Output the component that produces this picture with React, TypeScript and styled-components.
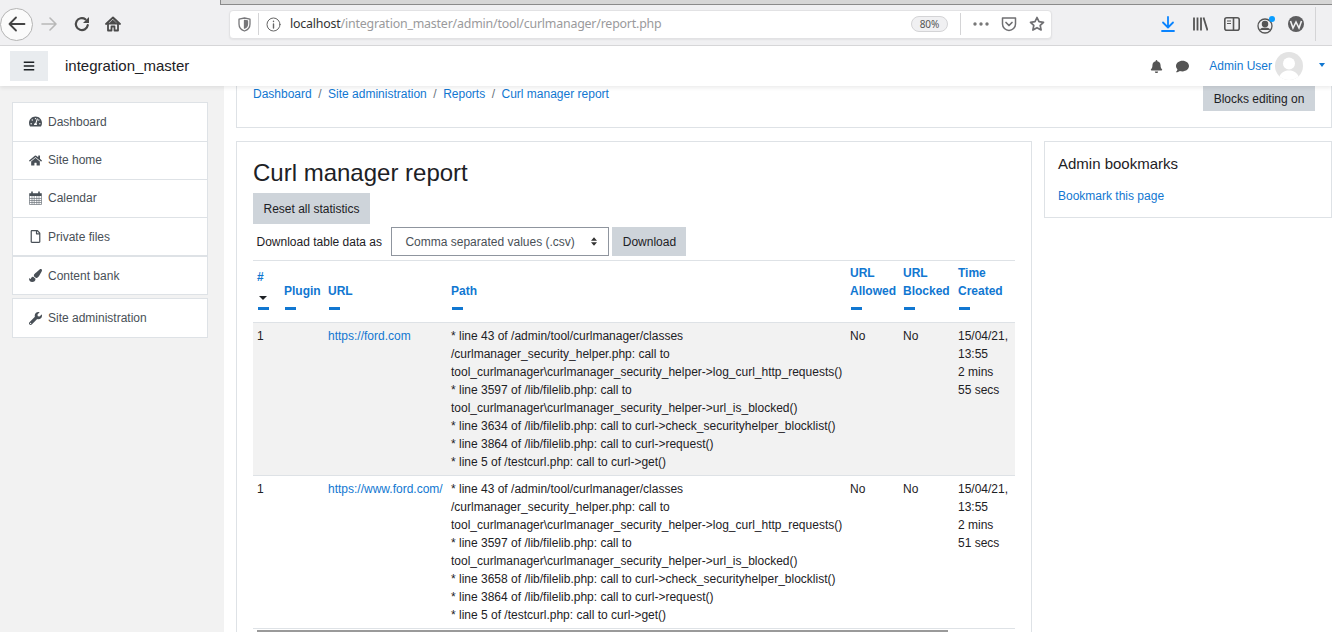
import React from "react";
import styled, { createGlobalStyle } from "styled-components";
import {
    FaBars,
    FaBell,
    FaComment,
    FaHome,
    FaPaintBrush,
    FaRegFile,
    FaTachometerAlt,
    FaWrench,
} from "react-icons/fa";

const GlobalStyle = createGlobalStyle`
    html, body {
        margin: 0;
        height: 632px;
        overflow: hidden;
        background: #fff;
        font-family: "Liberation Sans", Arial, sans-serif;
        font-size: 12px;
        line-height: 18px;
        color: #1d2125;
    }
    * { box-sizing: border-box; }
`;

const Browser = styled.div`
    height: 46px;
    background: #f0f0f2;
    border-bottom: 1px solid #d8d8da;
    display: flex;
    flex-direction: column;
`;

const TabSliver = styled.div`
    height: 5px;
    margin-left: 220px;
    background: #d6d6d6;
    border-left: 1px solid #8a8a8a;
    border-bottom: 1px solid #8a8a8a;
`;

const BrowserRow = styled.div`
    flex: 1;
    display: flex;
    align-items: center;
    padding-bottom: 2px;
`;

const BackButton = styled.div`
    width: 33px;
    height: 33px;
    border-radius: 50%;
    background: #fbfbfb;
    border: 1px solid #b4b4b4;
    display: flex;
    align-items: center;
    justify-content: center;
    flex-shrink: 0;
`;

const ToolIcon = styled.div<{ $left: number }>`
    margin-left: ${(p) => p.$left}px;
    display: flex;
    align-items: center;
    flex-shrink: 0;
`;

const UrlBar = styled.div`
    margin-left: 108px;
    width: 823px;
    height: 29px;
    background: #fff;
    border: 1px solid #e2e2e4;
    border-radius: 4px;
    display: flex;
    align-items: center;
    flex-shrink: 0;
    box-shadow: 0 1px 2px rgba(0, 0, 0, 0.06);
`;

const UrlText = styled.div`
    margin-left: 9px;
    width: 621px;
    font-family: "Noto Sans", sans-serif;
    font-size: 12.4px;
    letter-spacing: -0.016em;
    color: #9a9a9c;
    white-space: nowrap;
    b {
        font-weight: 400;
        color: #333;
    }
`;

const ZoomPill = styled.div`
    width: 37px;
    height: 16px;
    border-radius: 8px;
    background: #f0f0f2;
    border: 1px solid #d4d4d6;
    font-family: "Noto Sans", sans-serif;
    font-size: 10px;
    line-height: 14px;
    text-align: center;
    color: #555;
`;

const VLine = styled.div<{ $left: number; $h: number }>`
    margin-left: ${(p) => p.$left}px;
    width: 1px;
    height: ${(p) => p.$h}px;
    background: #d4d4d6;
    flex-shrink: 0;
`;

const Navbar = styled.header`
    position: relative;
    z-index: 2;
    height: 40px;
    background: #fff;
    box-shadow: 0 2px 4px rgba(0, 0, 0, 0.08);
    display: flex;
    align-items: center;
    padding-left: 10px;
`;

const MenuToggle = styled.div`
    width: 38px;
    height: 30px;
    background: #e9ecef;
    display: flex;
    align-items: center;
    justify-content: center;
    color: #1d2125;
    font-size: 12px;
`;

const Brand = styled.div`
    margin-left: 17px;
    font-size: 15px;
    color: #1d2125;
    flex: 1;
`;

const NavIcon = styled.div<{ $right: number }>`
    margin-right: ${(p) => p.$right}px;
    display: flex;
    color: #555;
    font-size: 13px;
`;

const UserLink = styled.a`
    color: #1177d1;
    margin-right: 3px;
    margin-bottom: 1px;
`;

const Avatar = styled.div`
    width: 28px;
    height: 28px;
    border-radius: 50%;
    overflow: hidden;
    background: #e3e3e3;
    margin-right: 16px;
`;

const NavCaret = styled.div`
    width: 0;
    height: 0;
    border-left: 3.5px solid transparent;
    border-right: 3.5px solid transparent;
    border-top: 4px solid #1177d1;
    margin: 0 7px 2px 0;
`;

const Page = styled.div`
    display: grid;
    grid-template-columns: 224px 1fr;
    height: 546px;
`;

const Sidebar = styled.nav`
    background: #f2f2f2;
    padding: 16px 16px 0 12px;
`;

const NavGroup = styled.div<{ $gap?: number }>`
    background: #fff;
    border: 1px solid #dee2e6;
    margin-top: ${(p) => p.$gap ?? 0}px;
`;

const NavItem = styled.a`
    height: 37.5px;
    display: flex;
    align-items: center;
    padding-left: 16px;
    color: #495057;
    & + & {
        border-top: 1px solid #dee2e6;
        height: 38.25px;
    }
`;

const NavIconBox = styled.span`
    width: 19px;
    display: flex;
    color: #495057;
    font-size: 13px;
`;

const Main = styled.main`
    padding: 0 0 0 12px;
    overflow: hidden;
`;

const HeaderCard = styled.div`
    height: 42px;
    border: 1px solid #dee2e6;
    border-top: 0;
    display: flex;
    justify-content: space-between;
    align-items: flex-start;
    padding: 0 16px;
`;

const Breadcrumb = styled.div`
    display: flex;
    gap: 6.5px;
    color: #6a737b;
    line-height: 16px;
    a {
        color: #1177d1;
    }
`;

const Button = styled.div`
    display: inline-flex;
    align-items: center;
    justify-content: center;
    background: #ced4da;
    color: #1d2125;
`;

const BlocksButton = styled(Button)`
    width: 112px;
    height: 25px;
`;

const Columns = styled.div`
    display: grid;
    grid-template-columns: 796px 288px;
    gap: 12px;
    margin-top: 13px;
`;

const Region = styled.section`
    border: 1px solid #dee2e6;
    padding: 16px 16px 0;
    height: 520px;
`;

const Title = styled.h1`
    margin: 0;
    font-size: 24px;
    line-height: 30px;
    font-weight: 400;
    color: #1d2125;
`;

const ResetButton = styled(Button)`
    width: 117px;
    height: 31px;
    margin-top: 5px;
`;

const DownloadRow = styled.div`
    display: flex;
    align-items: center;
    margin-top: 3px;
    padding-left: 3.5px;
    height: 29px;
`;

const SelectBox = styled.div`
    margin-left: 9.5px;
    width: 218px;
    height: 29px;
    border: 1px solid #8f959e;
    display: flex;
    align-items: center;
    justify-content: space-between;
    padding: 0 11px 0 13px;
    color: #495057;
`;

const DownloadButton = styled(Button)`
    margin-left: 3px;
    width: 74px;
    height: 29px;
`;

const Table = styled.table`
    width: 762px;
    margin-top: 4px;
    table-layout: fixed;
    border-collapse: collapse;
    th {
        text-align: left;
        vertical-align: bottom;
        font-weight: 700;
        color: #1177d1;
        padding: 3px 4px 4px;
        border-top: 1px solid #dee2e6;
        border-bottom: 1px solid #dee2e6;
    }
    td {
        vertical-align: top;
        padding: 4px;
        border-bottom: 1px solid #dee2e6;
        white-space: nowrap;
    }
    td a {
        color: #1177d1;
    }
`;

const Row = styled.tr<{ $shaded: boolean }>`
    background: ${(p) => (p.$shaded ? "#f2f2f2" : "#fff")};
`;

const Dash = styled.span`
    display: block;
    width: 11px;
    height: 3px;
    margin: 7px 0 8px 1px;
    background: #1177d1;
`;

const SortCaret = styled.span`
    display: block;
    width: 0;
    height: 0;
    margin: 10px 0 4px 2px;
    border-left: 4.5px solid transparent;
    border-right: 4.5px solid transparent;
    border-top: 4px solid #1d2125;
`;

const TimeCell = styled.td`
    && {
        white-space: normal;
    }
`;

const HScroll = styled.div`
    width: 691px;
    height: 3px;
    margin: 1px 0 0 4px;
    background: #9a9a9a;
`;

const Block = styled.aside`
    border: 1px solid #dee2e6;
    height: 77px;
    padding: 13px 13px 0;
`;

const BlockTitle = styled.h5`
    margin: 0;
    font-size: 15px;
    line-height: 18px;
    font-weight: 400;
    color: #1d2125;
`;

const BlockLink = styled.a`
    display: block;
    margin-top: 14px;
    color: #1177d1;
`;

const stroke = { fill: "none", strokeLinecap: "round", strokeLinejoin: "round" } as const;

const CalendarIcon = () => (
    <svg width="13" height="14" viewBox="0 0 13 14">
        <path
            d="M.5 2.500h12v11H.5z M.5 7.500h12 M.5 9.500h12 M.5 11.500h12 M3 5v8.500 M5.200 5v8.500 M7.800 5v8.500 M10 5v8.500"
            stroke="#6d747b"
            fill="none"
            strokeWidth=".7"
        />
        <path d="M.5 2.500h12v2.500H.5z" fill="#495057" />
        <path d="M3 .5v3M10 .5v3" stroke="#495057" strokeWidth="1.600" />
    </svg>
);

const AvatarFigure = () => (
    <svg width="28" height="28" viewBox="0 0 28 28">
        <circle cx="14" cy="11.500" r="6" fill="#fff" />
        <path d="M4 28c0-7 5-9.500 10-9.500S24 21 24 28z" fill="#fff" />
    </svg>
);

const pathRow = (blocklistLine: string, call: string) => [
    "* line 43 of /admin/tool/curlmanager/classes",
    "/curlmanager_security_helper.php: call to",
    "tool_curlmanager\\curlmanager_security_helper->log_curl_http_requests()",
    "* line 3597 of /lib/filelib.php: call to",
    "tool_curlmanager\\curlmanager_security_helper->url_is_blocked()",
    `* line ${blocklistLine} of /lib/filelib.php: call to ${call}`,
    "* line 3864 of /lib/filelib.php: call to curl->request()",
    "* line 5 of /testcurl.php: call to curl->get()",
];

const rows = [
    {
        id: 1,
        url: "https://ford.com",
        path: pathRow("3634", "curl->check_securityhelper_blocklist()"),
        time: ["15/04/21,", "13:55", "2 mins", "55 secs"],
    },
    {
        id: 1,
        url: "https://www.ford.com/",
        path: pathRow("3658", "curl->check_securityhelper_blocklist()"),
        time: ["15/04/21,", "13:55", "2 mins", "51 secs"],
    },
];

const navItems = [
    { label: "Dashboard", icon: <FaTachometerAlt /> },
    { label: "Site home", icon: <FaHome /> },
    { label: "Calendar", icon: <CalendarIcon /> },
    { label: "Private files", icon: <FaRegFile /> },
];

const headers = [
    { lines: ["Plugin"] },
    { lines: ["URL"] },
    { lines: ["Path"] },
    { lines: ["URL", "Allowed"] },
    { lines: ["URL", "Blocked"] },
    { lines: ["Time", "Created"] },
];

export default function App() {
    return (
        <>
            <GlobalStyle />
            <Browser>
                <TabSliver />
                <BrowserRow>
                    <BackButton>
                        <svg width="18" height="16" viewBox="0 0 18 16" {...stroke} stroke="#444" strokeWidth="1.800">
                            <path d="M1.500 8h15M8 1.500 1.500 8 8 14.500" />
                        </svg>
                    </BackButton>
                    <ToolIcon $left={8}>
                        <svg width="16" height="16" viewBox="0 0 16 16" {...stroke} stroke="#b8b8b8" strokeWidth="1.600">
                            <path d="M1 8h14M9 2l6 6-6 6" />
                        </svg>
                    </ToolIcon>
                    <ToolIcon $left={17}>
                        <svg width="16" height="16" viewBox="0 0 16 16" {...stroke} stroke="#4a4a4a" strokeWidth="2.200">
                            <path d="M13.800 9A6 6 0 1 1 11.500 3.300" />
                            <path d="M15 1v6H9z" fill="#4a4a4a" stroke="none" />
                        </svg>
                    </ToolIcon>
                    <ToolIcon $left={15}>
                        <svg width="16" height="16" viewBox="0 0 16 16" {...stroke} stroke="#4a4a4a" strokeWidth="1.800">
                            <path d="M1 8 8 1.500 15 8" />
                            <path d="M3 7v7.500h3.500v-4h3v4H13V7" />
                            <path d="M8 4 3.500 8h9z" fill="#4a4a4a" strokeWidth="1" />
                        </svg>
                    </ToolIcon>
                    <UrlBar>
                        <ToolIcon $left={8}>
                            <svg width="13" height="15" viewBox="0 0 13 15" {...stroke} stroke="#77777a" strokeWidth="1.300">
                                <path d="M1 2.200 6.500 1 12 2.200V7c0 3.500-2.500 6-5.500 7C3.500 13 1 10.500 1 7z" />
                                <path d="M6.500 3.500 9.500 4v3c0 2-1.300 3.500-3 4.200z" fill="#77777a" />
                            </svg>
                        </ToolIcon>
                        <VLine $left={7} $h={22} />
                        <ToolIcon $left={7}>
                            <svg width="15" height="15" viewBox="0 0 15 15" {...stroke} stroke="#666" strokeWidth="1">
                                <circle cx="7.500" cy="7.500" r="6.500" />
                                <path d="M7.500 7v4M7.500 4.200v.3" strokeWidth="1.400" />
                            </svg>
                        </ToolIcon>
                        <UrlText>
                            <b>localhost</b>/integration_master/admin/tool/curlmanager/report.php
                        </UrlText>
                        <ZoomPill>80%</ZoomPill>
                        <VLine $left={12} $h={22} />
                        <ToolIcon $left={12}>
                            <svg width="16" height="4" viewBox="0 0 16 4" fill="#777">
                                <circle cx="2" cy="2" r="1.700" />
                                <circle cx="8" cy="2" r="1.700" />
                                <circle cx="14" cy="2" r="1.700" />
                            </svg>
                        </ToolIcon>
                        <ToolIcon $left={12}>
                            <svg width="16" height="15" viewBox="0 0 16 15" {...stroke} stroke="#6f6f72" strokeWidth="1.500">
                                <path d="M1.500 1h13v6c0 3.500-3 6.500-6.500 6.500S1.500 10.500 1.500 7z" />
                                <path d="M5 5.500 8 8.500l3-3" strokeWidth="1.700" />
                            </svg>
                        </ToolIcon>
                        <ToolIcon $left={12}>
                            <svg width="16" height="16" viewBox="0 0 16 16" {...stroke} stroke="#6f6f72" strokeWidth="1.700">
                                <path d="M8 1.500 10 5.700l4.500.6-3.300 3.100.9 4.600L8 11.700 3.900 14l.9-4.600L1.500 6.300 6 5.700z" />
                            </svg>
                        </ToolIcon>
                    </UrlBar>
                    <ToolIcon $left={109}>
                        <svg width="14" height="16" viewBox="0 0 14 16" {...stroke} stroke="#0a84ff" strokeWidth="1.800">
                            <path d="M7 1v10M2 6.500 7 11.500l5-5M1 15h12" />
                        </svg>
                    </ToolIcon>
                    <ToolIcon $left={18}>
                        <svg width="15" height="14" viewBox="0 0 15 14" fill="none" stroke="#555" strokeWidth="1.800">
                            <path d="M1 .5v13M4.500 .5v13M8 .5v13M10.500 .5l4 13" />
                        </svg>
                    </ToolIcon>
                    <ToolIcon $left={16}>
                        <svg width="16" height="14" viewBox="0 0 16 14" fill="none" stroke="#555" strokeWidth="1.600">
                            <rect x=".8" y=".8" width="14.400" height="12.400" rx="2" />
                            <path d="M9.500 1v12" />
                            <path d="M3 4h4M3 6.500h4" strokeWidth="1" />
                        </svg>
                    </ToolIcon>
                    <ToolIcon $left={17}>
                        <svg width="19" height="19" viewBox="0 0 19 19" fill="none" stroke="#555" strokeWidth="1.300">
                            <circle cx="8" cy="11" r="7" />
                            <circle cx="8" cy="9" r="2.600" fill="#555" />
                            <path d="M3.500 15c1-2.500 8-2.500 9 0" fill="#555" />
                            <circle cx="15" cy="4" r="3" fill="#0a9dff" stroke="none" />
                        </svg>
                    </ToolIcon>
                    <ToolIcon $left={12}>
                        <svg width="16" height="16" viewBox="0 0 16 16">
                            <circle cx="8" cy="8" r="8" fill="#5d5d5f" />
                            <path d="M2.500 5 5 12l3-6 3 6 2.500-7" fill="none" stroke="#f0f0f2" strokeWidth="1.600" />
                        </svg>
                    </ToolIcon>
                    <VLine $left={11} $h={34} />
                </BrowserRow>
            </Browser>
            <Navbar>
                <MenuToggle>
                    <FaBars />
                </MenuToggle>
                <Brand>integration_master</Brand>
                <NavIcon $right={13}>
                    <FaBell />
                </NavIcon>
                <NavIcon $right={20}>
                    <FaComment />
                </NavIcon>
                <UserLink>Admin User</UserLink>
                <Avatar>
                    <AvatarFigure />
                </Avatar>
                <NavCaret />
            </Navbar>
            <Page>
                <Sidebar>
                    <NavGroup>
                        {navItems.map((item) => (
                            <NavItem key={item.label}>
                                <NavIconBox>{item.icon}</NavIconBox>
                                {item.label}
                            </NavItem>
                        ))}
                    </NavGroup>
                    <NavGroup $gap={-0.5}>
                        <NavItem>
                            <NavIconBox>
                                <FaPaintBrush />
                            </NavIconBox>
                            Content bank
                        </NavItem>
                    </NavGroup>
                    <NavGroup $gap={3}>
                        <NavItem>
                            <NavIconBox>
                                <FaWrench />
                            </NavIconBox>
                            Site administration
                        </NavItem>
                    </NavGroup>
                </Sidebar>
                <Main>
                    <HeaderCard>
                        <Breadcrumb>
                            <a>Dashboard</a>/<a>Site administration</a>/<a>Reports</a>/<a>Curl manager report</a>
                        </Breadcrumb>
                        <BlocksButton>Blocks editing on</BlocksButton>
                    </HeaderCard>
                    <Columns>
                        <Region>
                            <Title>Curl manager report</Title>
                            <ResetButton>Reset all statistics</ResetButton>
                            <DownloadRow>
                                Download table data as
                                <SelectBox>
                                    Comma separated values (.csv)
                                    <svg width="6" height="9" viewBox="0 0 7 10" fill="#333">
                                        <path d="M3.500 0 7 4H0zM3.500 10 0 6h7z" />
                                    </svg>
                                </SelectBox>
                                <DownloadButton>Download</DownloadButton>
                            </DownloadRow>
                            <Table>
                                <colgroup>
                                    <col style={{ width: 27 }} />
                                    <col style={{ width: 44 }} />
                                    <col style={{ width: 123 }} />
                                    <col style={{ width: 399 }} />
                                    <col style={{ width: 53 }} />
                                    <col style={{ width: 55 }} />
                                    <col style={{ width: 61 }} />
                                </colgroup>
                                <thead>
                                    <tr>
                                        <th>
                                            #
                                            <SortCaret />
                                            <Dash />
                                        </th>
                                        {headers.map((h, i) => (
                                            <th key={i}>
                                                {h.lines.map((line) => (
                                                    <div key={line}>{line}</div>
                                                ))}
                                                <Dash />
                                            </th>
                                        ))}
                                    </tr>
                                </thead>
                                <tbody>
                                    {rows.map((row, i) => (
                                        <Row key={row.url} $shaded={i === 0}>
                                            <td>{row.id}</td>
                                            <td />
                                            <td>
                                                <a>{row.url}</a>
                                            </td>
                                            <td>
                                                {row.path.map((line) => (
                                                    <div key={line}>{line}</div>
                                                ))}
                                            </td>
                                            <td>No</td>
                                            <td>No</td>
                                            <TimeCell>
                                                {row.time.map((line) => (
                                                    <div key={line}>{line}</div>
                                                ))}
                                            </TimeCell>
                                        </Row>
                                    ))}
                                </tbody>
                            </Table>
                            <HScroll />
                        </Region>
                        <Block>
                            <BlockTitle>Admin bookmarks</BlockTitle>
                            <BlockLink>Bookmark this page</BlockLink>
                        </Block>
                    </Columns>
                </Main>
            </Page>
        </>
    );
}
